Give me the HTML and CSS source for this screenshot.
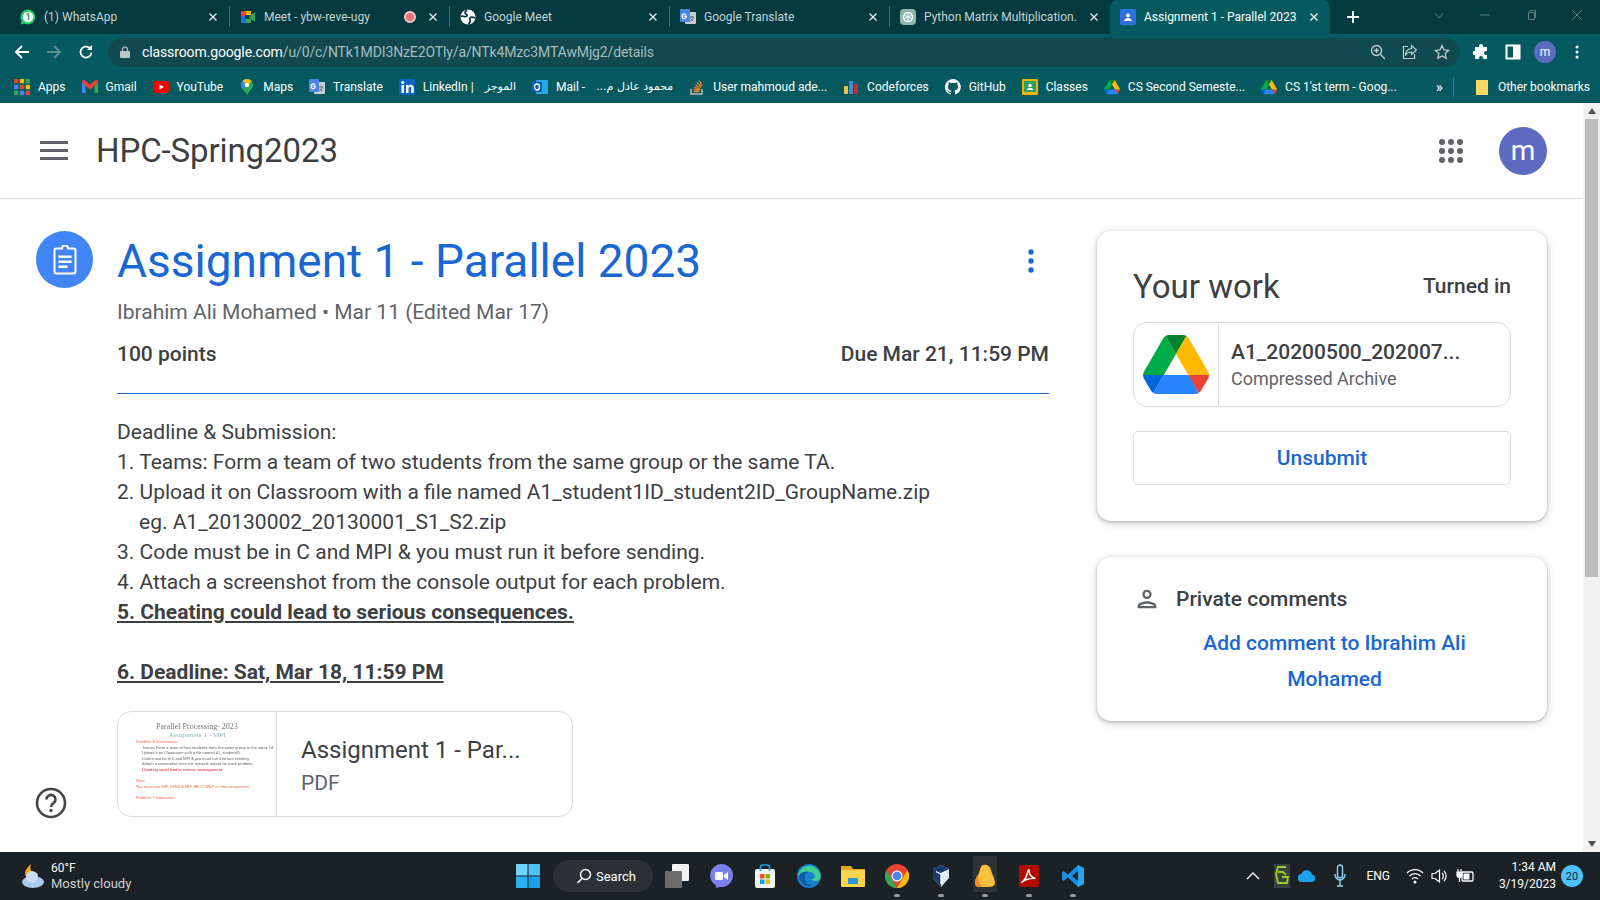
FILE: index.html
```html
<!DOCTYPE html>
<html lang="en">
<head>
<meta charset="utf-8">
<title>Assignment 1 - Parallel 2023</title>
<link rel="stylesheet" href="styles.css">
</head>
<body>
<svg class="defs" width="0" height="0">
  <defs>
    <symbol id="drive" viewBox="0 0 87.3 78">
      <path d="m6.6 66.85 3.85 6.65c.8 1.4 1.95 2.5 3.3 3.3l13.75-23.8h-27.5c0 1.55.4 3.1 1.2 4.5z" fill="#0066da"/>
      <path d="m43.65 25-13.75-23.8c-1.35.8-2.5 1.9-3.3 3.3l-25.4 44a9.06 9.06 0 0 0 -1.2 4.5h27.5z" fill="#00ac47"/>
      <path d="m73.55 76.8c1.35-.8 2.5-1.9 3.3-3.3l1.6-2.75 7.65-13.25c.8-1.4 1.2-2.95 1.2-4.5h-27.502l5.852 11.5z" fill="#ea4335"/>
      <path d="m43.65 25 13.75-23.8c-1.35-.8-2.9-1.2-4.5-1.2h-18.5c-1.6 0-3.15.45-4.5 1.2z" fill="#00832d"/>
      <path d="m59.8 53h-32.3l-13.75 23.8c1.35.8 2.9 1.2 4.5 1.2h50.8c1.6 0 3.15-.45 4.5-1.2z" fill="#2684fc"/>
      <path d="m73.4 26.5-12.7-22c-.8-1.4-1.95-2.5-3.3-3.3l-13.75 23.8 16.15 28h27.45c0-1.55-.4-3.1-1.2-4.5z" fill="#ffba00"/>
    </symbol>
    <symbol id="translate" viewBox="0 0 16 16">
      <rect x="5" y="3" width="11" height="12" rx="1" fill="#c8ccd4"/>
      <rect x="0" y="0" width="10" height="13" rx="1" fill="#4a86e8"/>
      <path d="M7 6.5H3.6v1.2h2c-.2 1-1 1.5-2 1.2-1-.4-1.2-1.7-.7-2.6.5-.8 1.7-1 2.4-.3l.9-.9C5 3.9 3 4.2 2 5.3.9 6.700 1.300 9 3 9.900c1.900.9 4.200-.4 4-3.400z" fill="#fff"/>
      <path d="M10 8h4M12 7v1M13.200 8c-.4 2-1.600 3.300-3 4M10.800 9.500c.6 1 1.500 1.900 2.500 2.500" stroke="#5f6368" stroke-width=".9" fill="none"/>
    </symbol>
    <symbol id="close" viewBox="0 0 10 10">
      <path d="M1.500 1.500l7 7M8.500 1.500l-7 7" stroke="currentColor" stroke-width="1.300" fill="none"/>
    </symbol>
  </defs>
</svg>

<div class="screen">
  <div class="tabstrip">
    <div class="tab">
      <svg class="fav" viewBox="0 0 16 16"><path d="M8 .5a7.400 7.400 0 0 0-6.300 11.300L.6 15.500l3.800-1A7.400 7.400 0 1 0 8 .5z" fill="#25d366"/><circle cx="8" cy="8" r="5.200" fill="#fff"/><text class="fav-num" x="8" y="11">1</text></svg>
      <span class="tab-title">(1) WhatsApp</span>
      <svg class="tab-x"><use href="#close"/></svg>
    </div>
    <div class="tab">
      <svg class="fav" viewBox="0 0 16 16"><rect x="1" y="2" width="5" height="5" fill="#ea4335"/><rect x="1" y="7" width="5" height="7" fill="#1a73e8"/><rect x="6" y="2" width="5" height="4" fill="#fbbc04"/><rect x="6" y="10" width="5" height="4" fill="#34a853"/><rect x="9" y="6" width="2" height="4" fill="#188038"/><path d="M11 6l4-3v10l-4-3z" fill="#34a853"/><rect x="5" y="6" width="4" height="4" fill="#03393f"/></svg>
      <span class="tab-title">Meet - ybw-reve-ugy</span>
      <span class="rec"></span>
      <svg class="tab-x"><use href="#close"/></svg>
    </div>
    <div class="tab">
      <svg class="fav" viewBox="0 0 16 16"><circle cx="8" cy="8" r="7.500" fill="#fff"/><path d="M7 .9C5 3 4 4 6.500 5.500 8 6.500 6 8 4.500 7.500 3 7 1.600 7 .6 7.500M15 9c-2-1-4-1.500-5 0-1 1.500 1 2.500 0 4-.5.8-1 1.500-1.500 2.300" stroke="#03393f" stroke-width="1.800" fill="none"/></svg>
      <span class="tab-title">Google Meet</span>
      <svg class="tab-x"><use href="#close"/></svg>
    </div>
    <div class="tab">
      <svg class="fav"><use href="#translate"/></svg>
      <span class="tab-title">Google Translate</span>
      <svg class="tab-x"><use href="#close"/></svg>
    </div>
    <div class="tab tab-last">
      <svg class="fav" viewBox="0 0 16 16"><rect width="16" height="16" rx="4" fill="#8fb8aa"/><circle cx="8" cy="8" r="4.500" fill="none" stroke="#fff" stroke-width="1.300"/><path d="M8 3.500v9M4 6l8 4M12 6l-8 4" stroke="#fff" stroke-width=".9"/></svg>
      <span class="tab-title">Python Matrix Multiplication.</span>
      <svg class="tab-x"><use href="#close"/></svg>
    </div>
    <div class="tab tab-active">
      <svg class="fav" viewBox="0 0 16 16"><rect width="16" height="16" rx="2" fill="#2f6fe0"/><circle cx="8" cy="6.500" r="2" fill="#fff"/><path d="M4 12c.4-2 2-3 4-3s3.600 1 4 3z" fill="#fff"/></svg>
      <span class="tab-title">Assignment 1 - Parallel 2023</span>
      <svg class="tab-x"><use href="#close"/></svg>
    </div>
    <svg class="newtab" viewBox="0 0 14 14"><path d="M7 1v12M1 7h12" stroke="#fff" stroke-width="1.800"/></svg>
    <div class="winctl">
      <svg viewBox="0 0 12 12"><path d="M2 4l4 5 4-5" fill="none" stroke="currentColor"/></svg>
      <svg viewBox="0 0 12 12"><path d="M1 6h10" stroke="currentColor"/></svg>
      <svg viewBox="0 0 12 12"><path d="M3.500 3.500h6v7h-6zM5 3.500V1.500h5.500v7h-1" fill="none" stroke="currentColor"/></svg>
      <svg viewBox="0 0 12 12"><path d="M1 1l10 10M11 1L1 11" stroke="currentColor"/></svg>
    </div>
  </div>

  <div class="toolbar">
    <svg class="nav-ic" viewBox="0 0 16 16"><path d="M15 8H2M8 2L2 8l6 6" fill="none" stroke="#fff" stroke-width="1.800"/></svg>
    <svg class="nav-ic nav-off" viewBox="0 0 16 16"><path d="M1 8h13M8 2l6 6-6 6" fill="none" stroke="currentColor" stroke-width="1.800"/></svg>
    <svg class="nav-ic" viewBox="0 0 16 16"><path d="M13.500 8.500A5.500 5.500 0 1 1 11.500 3.800" fill="none" stroke="#fff" stroke-width="1.800"/><path d="M14 1v5H9z" fill="#fff"/></svg>
    <div class="omnibox">
      <svg class="lock" viewBox="0 0 10 12"><path d="M2.500 5V3.500a2.500 2.500 0 0 1 5 0V5" fill="none" stroke="#b9c6c8" stroke-width="1.200"/><rect y="5" width="10" height="7" rx="1" fill="#b9c6c8"/></svg>
      <span class="url"><span class="url-host">classroom.google.com</span>/u/0/c/NTk1MDI3NzE2OTly/a/NTk4Mzc3MTAwMjg2/details</span>
      <svg class="omni-ic" viewBox="0 0 16 16"><circle cx="6.500" cy="6.500" r="5" fill="none" stroke="currentColor" stroke-width="1.300"/><path d="M10.500 10.500L15 15M4 6.500h5M6.500 4v5" stroke="currentColor" stroke-width="1.300"/></svg>
      <svg class="omni-ic" viewBox="0 0 16 16"><path d="M6 2.500H1.500v12h11V10M9.500 1.500l5 4.500-5 4.500V8C7 8 4.500 9 3.500 11.500 3.500 7.500 6 5 9.500 4.500z" fill="none" stroke="currentColor" stroke-width="1.200"/></svg>
      <svg class="omni-ic" viewBox="0 0 16 16"><path d="M8 1.500l2 4.400 4.700.5-3.500 3.200 1 4.700L8 11.900l-4.200 2.400 1-4.700L1.300 6.400 6 5.900z" fill="none" stroke="currentColor" stroke-width="1.300"/></svg>
    </div>
    <div class="tool-right">
      <svg viewBox="0 0 16 16"><path d="M6 2a2 2 0 0 1 4 0v1h4v4h-1a2 2 0 0 0 0 4h1v4H10v-1a2 2 0 0 0-4 0v1H2v-4H1a2 2 0 0 1 0-4h1V3h4z" fill="#fff"/></svg>
      <svg viewBox="0 0 16 16"><rect x="1.500" y="1.500" width="13" height="13" fill="none" stroke="#fff" stroke-width="2"/><rect x="8" y="2" width="6" height="12" fill="#fff"/></svg>
      <span class="chrome-avatar">m</span>
      <svg viewBox="0 0 16 16"><circle cx="8" cy="3" r="1.500" fill="#fff"/><circle cx="8" cy="8" r="1.500" fill="#fff"/><circle cx="8" cy="13" r="1.500" fill="#fff"/></svg>
    </div>
  </div>

  <div class="bookmarks">
    <div class="bm"><svg class="bm-ic" viewBox="0 0 15 15"><rect width="4" height="4" fill="#ea4335"/><rect x="5.500" width="4" height="4" fill="#fbbc04"/><rect x="11" width="4" height="4" fill="#34a853"/><rect y="5.500" width="4" height="4" fill="#4285f4"/><rect x="5.500" y="5.500" width="4" height="4" fill="#ea4335"/><rect x="11" y="5.500" width="4" height="4" fill="#fbbc04"/><rect y="11" width="4" height="4" fill="#34a853"/><rect x="5.500" y="11" width="4" height="4" fill="#4285f4"/><rect x="11" y="11" width="4" height="4" fill="#ea4335"/></svg>Apps</div>
    <div class="bm"><svg class="bm-ic" viewBox="0 0 16 14"><path d="M0 2v11h3.500V6z" fill="#4285f4"/><path d="M16 2v11h-3.500V6z" fill="#34a853"/><path d="M0 2c0-2 2-2.500 3.500-1.200L8 4.500 12.500.8C14-.5 16 0 16 2l-3.500 4L8 9.500 3.500 6z" fill="#ea4335"/></svg>Gmail</div>
    <div class="bm"><svg class="bm-ic" viewBox="0 0 16 12"><rect width="16" height="12" rx="3" fill="#f00"/><path d="M6.500 3.500L11 6l-4.500 2.500z" fill="#fff"/></svg>YouTube</div>
    <div class="bm"><svg class="bm-ic" viewBox="0 0 12 16"><path d="M6 0a6 6 0 0 1 6 6c0 3.500-4 6-6 10-2-4-6-6.500-6-10a6 6 0 0 1 6-6z" fill="#34a853"/><path d="M6 0a6 6 0 0 1 4.800 2.400L2 9.500C.8 8.300 0 7.300 0 6a6 6 0 0 1 6-6z" fill="#4285f4"/><path d="M6 0a6 6 0 0 0-4.500 2L6 6l4.800-3.600A6 6 0 0 0 6 0z" fill="#fbbc04"/><circle cx="6" cy="6" r="2.200" fill="#fff"/></svg>Maps</div>
    <div class="bm"><svg class="bm-ic"><use href="#translate"/></svg>Translate</div>
    <div class="bm"><svg class="bm-ic" viewBox="0 0 16 16"><rect width="16" height="16" rx="1" fill="#0a66c2"/><rect x="2.500" y="6" width="2.500" height="8" fill="#fff"/><circle cx="3.700" cy="3.500" r="1.500" fill="#fff"/><path d="M7 6h2.400v1.200C10 6.300 11 5.800 12 5.800c2 0 2.700 1.300 2.700 3.200v5h-2.500V9.500c0-1-.3-1.700-1.200-1.700-1 0-1.500.7-1.500 1.700V14H7z" fill="#fff"/></svg>LinkedIn | <bdi>الموجز</bdi></div>
    <div class="bm"><svg class="bm-ic" viewBox="0 0 16 16"><rect x="4" y="1" width="12" height="14" rx="1" fill="#28a8ea"/><rect y="3" width="10" height="10" rx="1" fill="#0f5fb0"/><ellipse cx="5" cy="8" rx="2.500" ry="3" fill="none" stroke="#fff" stroke-width="1.300"/></svg>Mail - <bdi>محمود عادل م...</bdi></div>
    <div class="bm"><svg class="bm-ic" viewBox="0 0 14 16"><path d="M1 10v5h11v-5" fill="none" stroke="#bcbbbb" stroke-width="1.500"/><path d="M3.500 12.500h6M3.700 10.500l6 .5M4.300 8.300l5.800 1.500M5.300 6l5.400 2.700M7 3.800l4.500 3.800M9.300 1.500l3 5" stroke="#f48024" stroke-width="1.300"/></svg>User mahmoud ade...</div>
    <div class="bm"><svg class="bm-ic" viewBox="0 0 16 16"><rect x="1" y="7" width="4" height="8" rx="1" fill="#f6c342"/><rect x="6" y="2" width="4" height="13" rx="1" fill="#3f8fd2"/><rect x="11" y="5" width="4" height="10" rx="1" fill="#c9302c"/></svg>Codeforces</div>
    <div class="bm"><svg class="bm-ic" viewBox="0 0 16 16"><path d="M8 0a8 8 0 0 0-2.500 15.600c.4.100.5-.2.500-.4v-1.400c-2.200.5-2.700-1-2.700-1-.4-.9-.9-1.200-.9-1.200-.7-.5.100-.5.100-.5.800.100 1.200.8 1.200.8.700 1.200 1.900.9 2.300.7.100-.5.300-.9.500-1.100-1.800-.2-3.600-.9-3.600-4 0-.9.300-1.600.8-2.100-.1-.2-.4-1 .100-2.100 0 0 .7-.2 2.200.8a7.600 7.600 0 0 1 4 0c1.500-1 2.200-.8 2.200-.8.400 1.100.2 1.900.1 2.100.5.600.8 1.300.8 2.100 0 3.100-1.900 3.700-3.700 3.900.3.300.6.800.6 1.500v2.200c0 .2.100.5.600.4A8 8 0 0 0 8 0z" fill="#fff"/></svg>GitHub</div>
    <div class="bm"><svg class="bm-ic" viewBox="0 0 16 16"><rect width="16" height="16" rx="1" fill="#f4b400"/><rect x="2" y="2" width="12" height="11" fill="#2e9e5b"/><circle cx="8" cy="6.500" r="1.800" fill="#fff"/><path d="M4.500 11c.4-1.500 2-2 3.500-2s3.100.5 3.500 2z" fill="#fff"/></svg>Classes</div>
    <div class="bm"><svg class="bm-ic"><use href="#drive"/></svg>CS Second Semeste...</div>
    <div class="bm"><svg class="bm-ic"><use href="#drive"/></svg>CS 1'st term - Goog...</div>
    <div class="bm-more">
      <span class="chev">»</span>
      <span class="bm-sep"></span>
      <div class="bm"><svg class="bm-ic" viewBox="0 0 12 16"><path d="M0 1h12v15H0z" fill="#fdd663"/></svg>Other bookmarks</div>
    </div>
  </div>

  <div class="page">
    <div class="page-scroll">
      <header class="class-head">
        <div class="burger"><span></span><span></span><span></span></div>
        <h1 class="class-name">HPC-Spring2023</h1>
        <svg class="apps" viewBox="0 0 24 24"><g fill="#5f6368"><circle cx="3" cy="3" r="3"/><circle cx="12" cy="3" r="3"/><circle cx="21" cy="3" r="3"/><circle cx="3" cy="12" r="3"/><circle cx="12" cy="12" r="3"/><circle cx="21" cy="12" r="3"/><circle cx="3" cy="21" r="3"/><circle cx="12" cy="21" r="3"/><circle cx="21" cy="21" r="3"/></g></svg>
        <span class="avatar">m</span>
      </header>

      <main class="content">
        <div class="badge-col">
          <span class="assign-badge">
            <svg viewBox="0 0 30 30" width="30" height="30"><path d="M4.500 5.500a2 2 0 0 1 2-2H12a3 3 0 0 1 6 0h5.500a2 2 0 0 1 2 2v21a2 2 0 0 1-2 2h-17a2 2 0 0 1-2-2z" fill="none" stroke="#fff" stroke-width="2"/><path d="M8.500 10.500h13v2.500h-13zM8.500 15.500h13v2.500h-13zM8.500 20.500h9v2.500h-9z" fill="#fff"/></svg>
          </span>
        </div>
        <article class="detail">
          <div class="title-row">
            <h2 class="title">Assignment 1 - Parallel 2023</h2>
            <svg class="kebab" viewBox="0 0 6 24"><circle cx="3" cy="3" r="2.700"/><circle cx="3" cy="12" r="2.700"/><circle cx="3" cy="21" r="2.700"/></svg>
          </div>
          <p class="byline">Ibrahim Ali Mohamed • Mar 11 (Edited Mar 17)</p>
          <div class="meta-row"><span>100 points</span><span>Due Mar 21, 11:59 PM</span></div>
          <div class="instructions">
            <p>Deadline &amp; Submission:</p>
            <p>1. Teams: Form a team of two students from the same group or the same TA.</p>
            <p>2. Upload it on Classroom with a file named A1_student1ID_student2ID_GroupName.zip</p>
            <p class="indent">eg. A1_20130002_20130001_S1_S2.zip</p>
            <p>3. Code must be in C and MPI &amp; you must run it before sending.</p>
            <p>4. Attach a screenshot from the console output for each problem.</p>
            <p class="strong">5. Cheating could lead to serious consequences.</p>
            <p class="blank">&nbsp;</p>
            <p class="strong">6. Deadline: Sat, Mar 18, 11:59 PM</p>
          </div>
          <div class="attach attach-pdf">
            <div class="thumb">
              <div class="thumb-h">Parallel Processing- 2023</div>
              <div class="thumb-s">Assignment 1 - MPI</div>
              <div class="thumb-r">Deadline &amp; Submission:</div>
              <div class="thumb-l">Teams: Form a team of two students from the same group or the same TA</div>
              <div class="thumb-l">Upload it on Classroom with a file named A1_studentID</div>
              <div class="thumb-l">Code must be in C and MPI &amp; you must run it before sending</div>
              <div class="thumb-l">Attach a screenshot from the console output for each problem</div>
              <div class="thumb-l thumb-e">Cheating could lead to serious consequences</div>
              <div class="thumb-r thumb-gap">Note:</div>
              <div class="thumb-r">You must use MPI_SEND &amp; MPI_RECV ONLY on this assignment</div>
              <div class="thumb-r thumb-gap">Problem 1 Statement:</div>
            </div>
            <div class="attach-info">
              <div class="attach-name">Assignment 1 - Par...</div>
              <div class="attach-type">PDF</div>
            </div>
          </div>
        </article>
        <aside class="side">
          <section class="card work">
            <div class="work-head"><h3>Your work</h3><span>Turned in</span></div>
            <div class="attach attach-file">
              <div class="file-logo"><svg width="66" height="59"><use href="#drive"/></svg></div>
              <div class="file-info">
                <div class="file-name">A1_20200500_202007...</div>
                <div class="file-type">Compressed Archive</div>
              </div>
            </div>
            <div class="unsubmit">Unsubmit</div>
          </section>
          <section class="card comments">
            <div class="comments-head">
              <svg width="28" height="28" viewBox="0 0 24 24"><path d="M12 6a2 2 0 1 1 0 4 2 2 0 0 1 0-4m0 10c2.700 0 5.800 1.300 6 2H6c.2-.7 3.300-2 6-2M12 4a4 4 0 1 0 0 8 4 4 0 0 0 0-8zm0 10c-2.700 0-8 1.300-8 4v2h16v-2c0-2.700-5.300-4-8-4z" fill="#5f6368"/></svg>
              <span>Private comments</span>
            </div>
            <div class="add-comment">Add comment to Ibrahim Ali Mohamed</div>
          </section>
        </aside>
      </main>
      <svg class="help" viewBox="0 0 32 32"><circle cx="16" cy="16" r="14" fill="none" stroke="#444746" stroke-width="2.600"/><path d="M11.500 12.500a4.500 4.500 0 1 1 7 3.700c-1.500 1-2.500 1.800-2.500 3.800" fill="none" stroke="#444746" stroke-width="2.600"/><circle cx="16" cy="23.500" r="1.700" fill="#444746"/></svg>
    </div>
    <div class="scrollbar">
      <svg class="sb-arrow" viewBox="0 0 8 6"><path d="M4 0l4 6H0z"/></svg>
      <div class="sb-track"><div class="sb-thumb"></div></div>
      <svg class="sb-arrow" viewBox="0 0 8 6"><path d="M4 6L0 0h8z"/></svg>
    </div>
  </div>

  <div class="taskbar">
    <div class="weather">
      <svg width="26" height="26" viewBox="0 0 26 26"><path d="M12 1c-1 3-1 6 1 8s4 2 6 1c-1 4-5 6-9 5S3 9 12 1z" fill="#f5a623"/><ellipse cx="14" cy="19" rx="11" ry="6" fill="#a9cdf0"/><circle cx="13" cy="14" r="6" fill="#c7def5"/></svg>
      <div class="weather-text"><div>60°F</div><div class="weather-sub">Mostly cloudy</div></div>
    </div>
    <div class="tb-center">
      <svg class="win" viewBox="0 0 24 24"><rect width="11.500" height="11.500" fill="#6fd3fb"/><rect x="12.500" width="11.500" height="11.500" fill="#4fc0f5"/><rect y="12.500" width="11.500" height="11.500" fill="#2cb0f0"/><rect x="12.500" y="12.500" width="11.500" height="11.500" fill="#19a0e8"/></svg>
      <div class="tb-search">
        <svg width="16" height="16" viewBox="0 0 16 16"><circle cx="9.500" cy="6.500" r="5" fill="none" stroke="#fff" stroke-width="1.400"/><path d="M6 10.500L1.500 15" stroke="#fff" stroke-width="1.600"/></svg>
        <span>Search</span>
      </div>
      <div class="tb-slot"><svg viewBox="0 0 24 24"><rect x="7" width="17" height="17" rx="1" fill="#f2f2f2"/><rect y="7" width="17" height="17" rx="1" fill="#6d6d6d"/></svg></div>
      <div class="tb-slot"><svg viewBox="0 0 24 24"><path d="M12 0a12 11.500 0 0 1 0 23c-1.500 0-3 .5-5 1 .3-1 .3-2 0-2.500A11.500 11.500 0 0 1 12 0z" fill="#7b83eb"/><rect x="6" y="8" width="8" height="8" rx="1.500" fill="#fff"/><path d="M15 11l4-3v8l-4-3z" fill="#fff"/></svg></div>
      <div class="tb-slot"><svg viewBox="0 0 24 24"><rect x="2" y="5" width="20" height="19" rx="2" fill="#f3f3f3"/><path d="M7.500 7V3a2 2 0 0 1 2-2h5a2 2 0 0 1 2 2v4" fill="none" stroke="#1aa7e8" stroke-width="1.600"/><rect x="7" y="10" width="4.500" height="4.500" fill="#f25022"/><rect x="12.500" y="10" width="4.500" height="4.500" fill="#7fba00"/><rect x="7" y="15.500" width="4.500" height="4.500" fill="#00a4ef"/><rect x="12.500" y="15.500" width="4.500" height="4.500" fill="#ffb900"/></svg></div>
      <div class="tb-slot"><svg viewBox="0 0 24 24"><circle cx="12" cy="12" r="12" fill="#1b7fd0"/><path d="M1 12C2 5 8 1 14 2c5 1 9 5 9.500 10 .3 3-2 5-5 5-2 0-4-1-4-2 3 0 4-2 3-4-1-3-5-4-8-3-4 1-7 3-8.500 4z" fill="#3fd08f"/><path d="M3 10c2-2 6-3 8-2-3 1-4 5-2 9 1 2 3 4 6 5-6 2-12-3-13-8 0-1.500.3-3 1-4z" fill="#0f5fa8"/></svg></div>
      <div class="tb-slot"><svg viewBox="0 0 24 24"><path d="M0 2h10l2 3h12v4H0z" fill="#e8a920"/><rect y="6" width="24" height="17" rx="1" fill="#fbd54a"/><rect x="7" y="14" width="10" height="6" rx="1" fill="#2a94d6"/></svg></div>
      <div class="tb-slot tb-run"><svg viewBox="0 0 24 24"><circle cx="12" cy="12" r="12" fill="#ea4335"/><path d="M12 24A12 12 0 0 1 1.600 6l5.200 9z" fill="#34a853"/><path d="M12 24l5.200-9 5.200-9A12 12 0 0 1 12 24z" fill="#fbbc04"/><circle cx="12" cy="12" r="5.500" fill="#fff"/><circle cx="12" cy="12" r="4.300" fill="#4285f4"/></svg><i></i></div>
      <div class="tb-slot tb-run"><svg viewBox="0 0 24 24"><path d="M12 1l8 4v9l-8 9-8-9V5z" fill="#dfe6ee"/><path d="M12 1l8 4-8 4-8-4zM4 5l8 4v14l-8-9z" fill="#1a3a6b"/><path d="M7 7.500l5 2.500 5-2.500M12 10v10" stroke="#fff" stroke-width="1.300" fill="none"/></svg><i></i></div>
      <div class="tb-slot tb-run tb-open"><svg viewBox="0 0 24 24"><path d="M10 1c4-1 7 1 8 5s4 9 4 13c0 3-3 4-8 4H6c-3 0-4-2-4-4 0-3 1-5 3-8s2-9 5-10z" fill="#fbc13c"/><path d="M5 11c-2 3-3 5-3 8 0 2 1 4 4 4h4C6 20 5 15 5 11z" fill="#f68b1f"/></svg><i></i></div>
      <div class="tb-slot tb-run"><svg viewBox="0 0 24 24"><rect x="2" y="1" width="20" height="22" rx="2" fill="#b30b00"/><path d="M5 18c3-2 5-6 6-11 .3-2 1.500-1.500 1.300 0-.3 3 2 6 6 7.500-3-.3-7 0-10 1.500-1.300 1-2.300 2.300-3.300 2z" fill="none" stroke="#fff" stroke-width="1.400"/></svg><i></i></div>
      <div class="tb-slot tb-run"><svg viewBox="0 0 24 24"><path d="M17 1l6 3v16l-6 3L7 13.500 2.500 17 1 16v-8l1.500-1L7 10.500z" fill="#1a8fe3"/><path d="M17 1l6 3v16l-6 3zM17 7l-6 5 6 5z" fill="#2aa5f0"/><path d="M17 7l-6 5 6 5z" fill="#1c2327"/></svg><i></i></div>
    </div>
    <div class="tray">
      <svg class="tr-up" viewBox="0 0 14 8"><path d="M1 7l6-6 6 6" fill="none" stroke="#fff" stroke-width="1.300"/></svg>
      <svg class="tr-g" viewBox="0 0 16 24"><rect width="16" height="24" fill="#3a4043"/><path d="M12 3H4l-2 7 2 9h9l1-6H8M4 8h5l3 3" fill="none" stroke="#9bd11e" stroke-width="1.800"/></svg>
      <svg class="tr-cloud" viewBox="0 0 18 12"><path d="M4 12a4 4 0 0 1-.500-8A5.500 5.500 0 0 1 14 4.500 3.800 3.800 0 0 1 14 12z" fill="#1ea0ea"/></svg>
      <svg class="tr-mic" viewBox="0 0 12 24"><rect x="3.500" y="1" width="5" height="13" rx="2.500" fill="none" stroke="#8ed3f5" stroke-width="1.400"/><path d="M1 10a5 6 0 0 0 10 0M6 16v6M3 22h6" fill="none" stroke="#8ed3f5" stroke-width="1.400"/></svg>
      <span class="tr-lang">ENG</span>
      <svg class="tr-ic" viewBox="0 0 18 16"><path d="M1 5a11 11 0 0 1 16 0M3.500 8a7.500 7.500 0 0 1 11 0M6 11a4 4 0 0 1 6 0" fill="none" stroke="#fff" stroke-width="1.300"/><circle cx="9" cy="14" r="1.500" fill="#fff"/></svg>
      <svg class="tr-ic" viewBox="0 0 18 16"><path d="M1 5.500h3L8.500 2v12L4 10.500H1z" fill="none" stroke="#fff" stroke-width="1.200"/><path d="M11 5a4 4 0 0 1 0 6M13 3a7 7 0 0 1 0 10" fill="none" stroke="#fff" stroke-width="1.200"/></svg>
      <svg class="tr-ic" viewBox="0 0 18 16"><path d="M2 1v3M5 1v3M1 4h5v3a2.500 2.500 0 0 1-5 0zM3.500 9.500V14" stroke="#fff" stroke-width="1.200" fill="#fff"/><rect x="6" y="4" width="11" height="9" rx="1" fill="none" stroke="#fff" stroke-width="1.300"/><rect x="7.500" y="5.500" width="6" height="6" fill="#fff"/></svg>
      <div class="clock"><div>1:34 AM</div><div>3/19/2023</div></div>
      <span class="notif">20</span>
    </div>
  </div>
</div>
</body>
</html>
```

FILE: styles.css
```css
* { box-sizing: border-box; }
html, body { margin: 0; padding: 0; height: 100%; overflow: hidden; }
body { font-family: Roboto, "Noto Sans", "DejaVu Sans", sans-serif; background: #fff; color: #3c4043; }
p, h1, h2, h3 { margin: 0; font-weight: 400; }
.defs { position: absolute; }
.screen { display: flex; flex-direction: column; width: 1600px; height: 900px; }

/* tab strip */
.tabstrip { flex: 0 0 34px; display: flex; align-items: stretch; padding-left: 10px; background: #033a40; color: #c5d3d5; font-size: 12px; }
.tab { flex: 0 0 220px; display: flex; align-items: center; gap: 8px; padding: 0 10px 0 10px; position: relative; border-right: 1px solid #4a6d71; margin: 6px 0 7px; }
.tab-last { border-right: 0; }
.tab-active { height: 34px; margin: 0; background: #055a60; color: #fff; border: 0; border-radius: 8px 8px 0 0; }
.fav { flex: 0 0 16px; width: 16px; height: 16px; }
.fav-num { font: 700 9px Roboto, sans-serif; text-anchor: middle; fill: #25a04f; }
.tab-title { flex: 1; white-space: nowrap; overflow: hidden; }
.tab-x { flex: 0 0 10px; width: 10px; height: 10px; color: #e8eeee; margin-right: 1px; }
.tab-active .tab-x { color: #fff; }
.rec { flex: 0 0 12px; height: 12px; border-radius: 50%; background: #e57373; border: 2px solid #f6c8c4; margin-right: 4px; }
.newtab { width: 14px; height: 14px; align-self: center; margin-left: 16px; }
.winctl { margin-left: auto; display: flex; gap: 34px; padding-right: 17px; align-items: flex-start; padding-top: 9px; color: #5f7f83; }
.winctl svg { width: 12px; height: 12px; }

/* toolbar */
.toolbar { flex: 0 0 36px; display: flex; align-items: center; padding-left: 14px; background: #055a60; color: #fff; }
.nav-ic { flex: 0 0 16px; width: 16px; height: 16px; margin-right: 16px; }
.nav-off { color: #5f8f92; }
.omnibox { flex: 0 0 1352px; margin-left: -2px; height: 29px; display: flex; align-items: center; padding: 0 10px 0 12px; background: #104a50; border-radius: 15px; }
.lock { width: 10px; height: 12px; margin-right: 12px; }
.url { flex: 1; font-size: 14px; color: #a7bcbe; white-space: nowrap; letter-spacing: -.12px; }
.url-host { color: #fff; }
.omni-ic { width: 16px; height: 16px; margin-left: 16px; color: #c0cfd1; }
.tool-right { display: flex; align-items: center; gap: 16px; margin-left: 13px; }
.tool-right svg { width: 16px; height: 16px; }
.chrome-avatar { width: 22px; height: 22px; margin: 0 -3px; border-radius: 50%; background: #5c6bc0; color: #fff; font-size: 12px; display: flex; align-items: center; justify-content: center; }

/* bookmarks */
.bookmarks { flex: 0 0 33px; display: flex; align-items: center; gap: 16px; padding-left: 14px; background: #055a60; color: #fff; font-size: 12px; white-space: nowrap; }
.bm { display: flex; align-items: center; gap: 8px; }
.bm bdi { font-family: "DejaVu Sans", sans-serif; font-size: 11px; margin-left: 3px; }
.bm-ic { width: 16px; height: 16px; flex: 0 0 16px; }
.bm-more { margin-left: auto; display: flex; align-items: center; gap: 10px; padding-right: 10px; }
.chev { font-size: 15px; }
.bm-sep { width: 1px; height: 20px; background: #3b7d82; margin-right: 10px; }

/* page */
.page { flex: 1; min-height: 0; display: flex; background: #fff; }
.page-scroll { flex: 1; min-width: 0; position: relative; }
.scrollbar { flex: 0 0 17px; display: flex; flex-direction: column; align-items: center; background: #f1f1f1; padding: 0 2px; }
.sb-arrow { flex: 0 0 6px; width: 8px; height: 6px; margin: 5px 0; fill: #505050; }
.sb-track { flex: 1; width: 100%; }
.sb-thumb { height: 458px; background: #bcbcbc; }

.class-head { height: 96px; display: flex; align-items: center; padding: 0 36px 0 40px; border-bottom: 1px solid #dadce0; }
.burger { width: 28px; display: flex; flex-direction: column; gap: 5px; }
.burger span { height: 3px; background: #5f6368; }
.class-name { margin-left: 28px; font-size: 33px; color: #3c4043; letter-spacing: -.1px; }
.apps { width: 24px; height: 24px; margin-left: auto; }
.avatar { width: 48px; height: 48px; margin-left: 36px; border-radius: 50%; background: #5c6bc0; color: #fff; font-size: 28px; display: flex; align-items: center; justify-content: center; }

.content { display: flex; padding: 32px 36px 0 36px; }
.badge-col { flex: 0 0 81px; }
.assign-badge { width: 57px; height: 57px; border-radius: 50%; background: #4285f4; display: flex; align-items: center; justify-content: center; }
.detail { flex: 0 0 932px; }
.title-row { display: flex; align-items: center; height: 60px; }
.title { flex: 1; font-size: 46px; line-height: 60px; color: #1967d2; }
.kebab { width: 6px; height: 24px; fill: #1967d2; margin-right: 15px; }
.byline { margin-top: 6px; font-size: 21px; line-height: 30px; color: #5f6368; }
.meta-row { display: flex; justify-content: space-between; margin-top: 12px; padding-bottom: 24px; font-size: 21px; line-height: 30px; font-weight: 500; color: #3c4043; border-bottom: 1px solid #1967d2; }
.instructions { margin-top: 23px; font-size: 21px; line-height: 30px; color: #3c4043; }
.indent { padding-left: 22px; }
.strong { font-weight: 700; text-decoration: underline; }
.blank { height: 30px; }

.attach { display: flex; border: 1px solid #dadce0; background: #fff; }
.attach-pdf { width: 456px; height: 106px; margin-top: 24px; border-radius: 14px; overflow: hidden; }
.thumb { flex: 0 0 159px; padding: 10px 8px 0 18px; border-right: 1px solid #dadce0; font-size: 4px; line-height: 5.500px; white-space: nowrap; overflow: hidden; filter: blur(.3px); }
.thumb-h { font: 8px/9px "Liberation Serif", serif; color: #777; text-align: center; padding-right: 10px; }
.thumb-s { font: 7px/8px "Liberation Serif", serif; color: #8fb9bb; text-align: center; padding-right: 10px; }
.thumb-r { color: #ef6c4a; }
.thumb-l { color: #666; padding-left: 6px; }
.thumb-e { color: #c62828; }
.thumb-gap { margin-top: 6px; }
.attach-info { padding: 22px 0 0 24px; }
.attach-name { font-size: 24px; line-height: 32px; color: #3c4043; }
.attach-type { font-size: 21px; line-height: 30px; margin-top: 2px; color: #5f6368; }

.side { flex: 0 0 450px; margin-left: 48px; display: flex; flex-direction: column; gap: 36px; }
.card { border-radius: 14px; background: #fff; box-shadow: 0 1px 3px rgba(60,64,67,.3), 0 2px 6px 2px rgba(60,64,67,.15); padding: 0 36px; }
.work { height: 290px; }
.work-head { height: 91px; display: flex; align-items: center; justify-content: space-between; padding-top: 19px; }
.work-head h3 { font-size: 33px; color: #3c4043; }
.work-head span { font-size: 21px; font-weight: 500; color: #3c4043; }
.attach-file { height: 85px; border-radius: 14px; overflow: hidden; }
.file-logo { flex: 0 0 85px; display: flex; align-items: center; justify-content: center; border-right: 1px solid #dadce0; }
.file-info { padding: 14px 0 0 12px; }
.file-name { font-size: 21px; line-height: 30px; font-weight: 500; color: #3c4043; white-space: nowrap; }
.file-type { font-size: 18px; line-height: 24px; color: #5f6368; }
.unsubmit { height: 54px; margin-top: 24px; border: 1px solid #dadce0; border-radius: 5px; display: flex; align-items: center; justify-content: center; font-size: 21px; font-weight: 500; color: #1967d2; }
.comments { height: 164px; }
.comments-head { display: flex; align-items: center; gap: 15px; padding-top: 28px; font-size: 21px; font-weight: 500; color: #3c4043; }
.add-comment { margin: 12px 24px 0 49px; text-align: center; font-size: 21px; line-height: 36px; font-weight: 500; color: #1967d2; }
.help { position: absolute; left: 35px; bottom: 33px; width: 32px; height: 32px; }

/* taskbar */
.taskbar { flex: 0 0 48px; display: flex; align-items: center; background: #1b2125; color: #fff; font-size: 12px; }
.weather { flex: 0 0 516px; display: flex; align-items: center; gap: 6px; padding-left: 19px; }
.weather-text { line-height: 16px; }
.weather-sub { color: #d0d0d0; font-size: 13px; }
.tb-center { display: flex; align-items: center; }
.win { width: 24px; height: 24px; margin-right: 13px; }
.tb-search { width: 100px; height: 32px; border-radius: 16px; background: #2d3135; display: flex; align-items: center; gap: 4px; padding-left: 23px; margin-right: 2px; font-size: 13px; }
.tb-slot { width: 44px; height: 48px; display: flex; align-items: center; justify-content: center; position: relative; }
.tb-slot svg { width: 24px; height: 24px; }
.tb-run i { position: absolute; left: 19px; bottom: 3px; width: 6px; height: 3px; border-radius: 2px; background: #9a9a9a; }
.tb-open { background: linear-gradient(#1b2125 4px, #2f3336 4px, #2f3336 40px, #1b2125 40px); background-size: 24px 100%; background-position: center; background-repeat: no-repeat; }
.tray { margin-left: auto; display: flex; align-items: center; padding-right: 17px; }
.tr-up { width: 14px; height: 8px; margin-right: 14px; }
.tr-g { width: 16px; height: 24px; margin-right: 8px; }
.tr-cloud { width: 18px; height: 12px; margin-right: 18px; }
.tr-mic { width: 12px; height: 24px; margin-right: 20px; }
.tr-lang { margin-right: 16px; font-size: 12px; }
.tr-ic { width: 18px; height: 16px; margin-right: 7px; }
.clock { width: 72px; margin-left: 3px; text-align: right; line-height: 17px; }
.notif { width: 22px; height: 22px; margin-left: 5px; border-radius: 50%; background: #4cc2ff; color: #10262f; font-size: 11px; display: flex; align-items: center; justify-content: center; }
```
